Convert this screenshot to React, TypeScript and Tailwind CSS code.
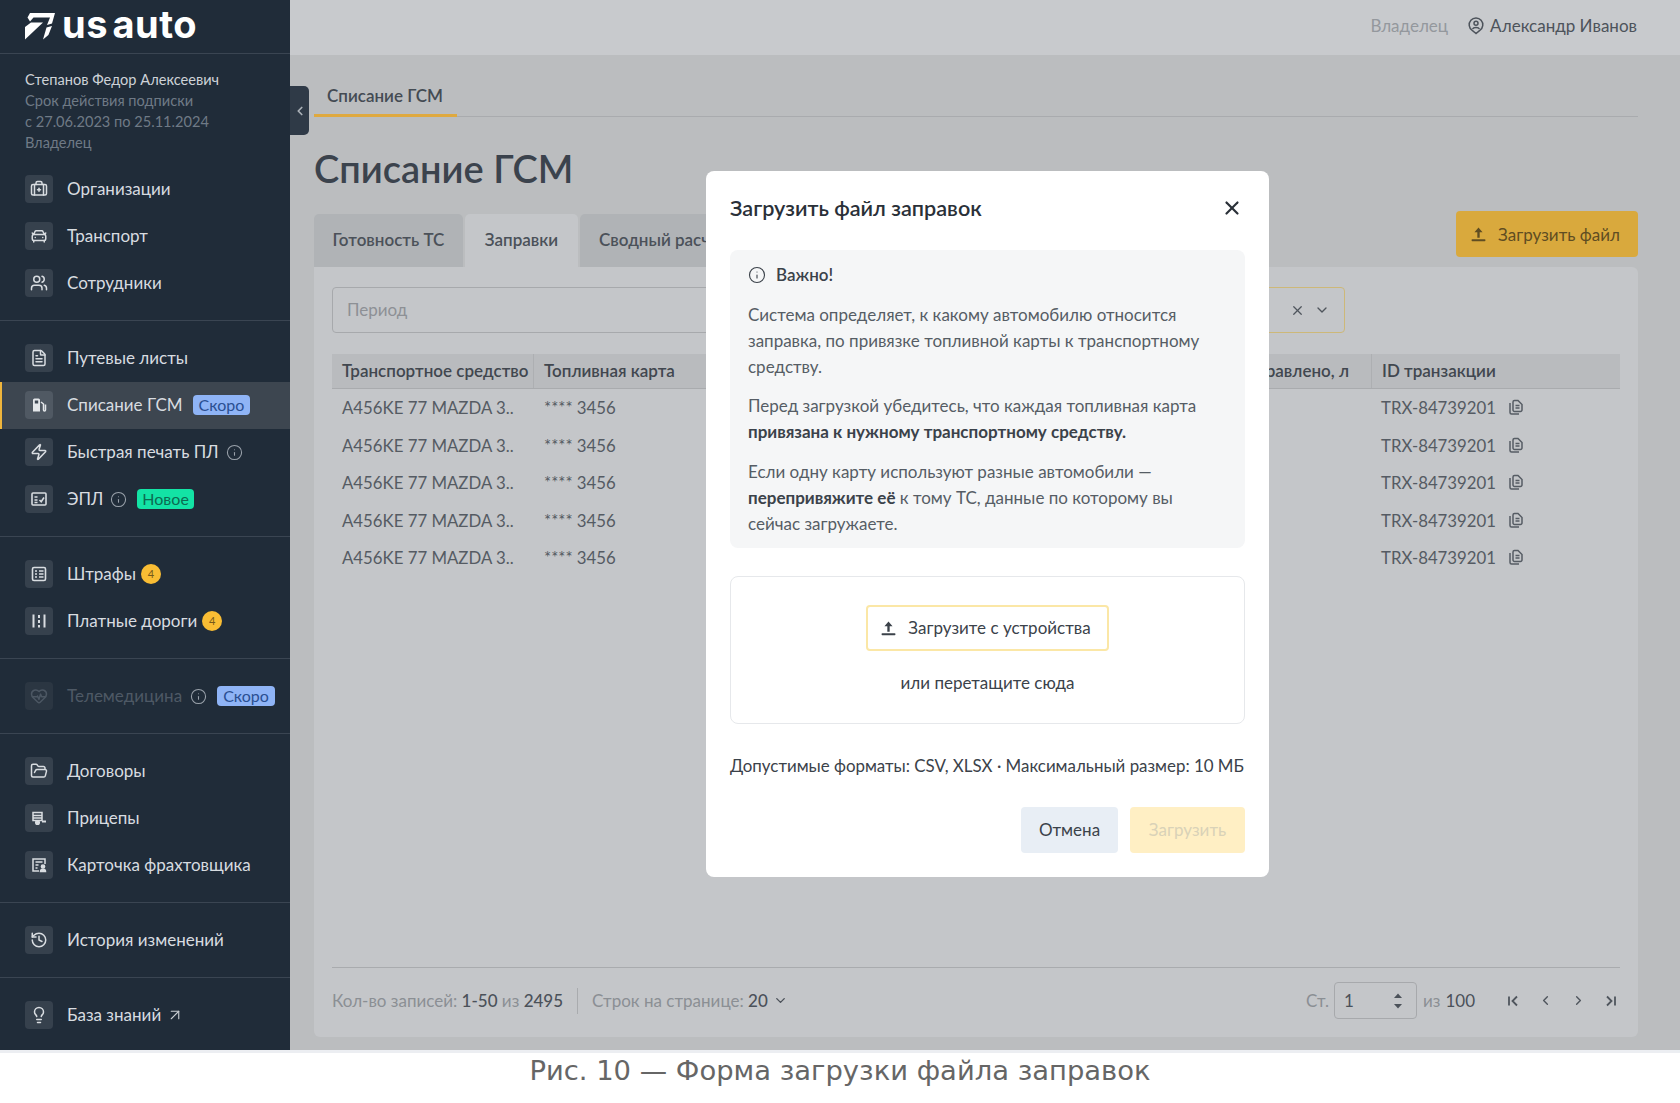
import React from "react";
import {
  BriefcaseMedical, CarFront, Users, FileText, Zap, HeartPulse, FolderOpen, History, Lightbulb,
  ArrowUpRight, Info, X, ChevronDown, ChevronLeft, ChevronRight,
} from "lucide-react";

const FONT = "font-['Lato','Noto_Sans',sans-serif]";

function FuelIcon() {
  return (
    <svg width="18" height="18" viewBox="0 0 18 18" fill="none">
      <path d="M3 15.5V4a1.5 1.5 0 0 1 1.5-1.5h4A1.5 1.5 0 0 1 10 4v11.5H3Z" fill="currentColor" />
      <rect x="4.8" y="4.5" width="3.4" height="3" fill="#3f4954" />
      <path d="M11 6l2.5 2v6a1 1 0 0 0 2 0V8.5" stroke="currentColor" strokeWidth="1.5" />
    </svg>
  );
}
function EplIcon() {
  return (
    <svg width="18" height="18" viewBox="0 0 18 18" fill="none" stroke="currentColor" strokeWidth="1.6">
      <rect x="2" y="3" width="14" height="12" rx="1" />
      <path d="M4.5 7h3M4.5 10h3M4.5 12.5h3M9.5 10l1.7 1.7L14 7.5" />
    </svg>
  );
}
function FinesIcon() {
  return (
    <svg width="18" height="18" viewBox="0 0 18 18" fill="none" stroke="currentColor" strokeWidth="1.6">
      <rect x="2.5" y="2.5" width="13" height="13" rx="1.5" />
      <path d="M5 6h2M5 9h2M5 12h2M9 6h4.5M9 9h4.5M9 12h4.5" />
    </svg>
  );
}
function RoadIcon() {
  return (
    <svg width="18" height="18" viewBox="0 0 18 18" fill="none" stroke="currentColor" strokeWidth="2">
      <path d="M3.5 2.5v13M14.5 2.5v13M9 3v3M9 8v3M9 13v2.5" />
    </svg>
  );
}
function TrailerIcon() {
  return (
    <svg width="18" height="18" viewBox="0 0 18 18" fill="none" stroke="currentColor" strokeWidth="1.5">
      <path d="M3 3.5h9v8H3zM3 6.5h9M3 9h9" />
      <circle cx="7.5" cy="13.5" r="1.8" fill="currentColor" />
      <path d="M12 12.5h4" strokeWidth="2" />
    </svg>
  );
}
function CardIcon() {
  return (
    <svg width="18" height="18" viewBox="0 0 18 18" fill="none" stroke="currentColor" strokeWidth="1.5">
      <path d="M15 8V3H3v12h6" />
      <path d="M5.5 6h7M5.5 9h3M5.5 12h2" />
      <circle cx="13" cy="10.5" r="1.6" fill="currentColor" />
      <path d="M10.5 15.5c0-3 5-3 5 0z" fill="currentColor" />
    </svg>
  );
}
function UploadIcon({ className = "" }: { className?: string }) {
  return (
    <svg className={className} width="17" height="17" viewBox="0 0 16 16" fill="currentColor">
      <path d="M8 1.5 11.8 5.8H9.1v5.2H6.9V5.8H4.2L8 1.5Z" />
      <rect x="1.5" y="12.4" width="13" height="1.9" rx="0.6" />
    </svg>
  );
}
function CopyIcon() {
  return (
    <svg width="17" height="17" viewBox="0 0 17 17" fill="none" stroke="#565c64" strokeWidth="1.5">
      <path d="M2 4v9.5A1.5 1.5 0 0 0 3.5 15H11" />
      <path d="M5 3a1.5 1.5 0 0 1 1.5-1.5H10L14 5.5V11a1.5 1.5 0 0 1-1.5 1.5h-6A1.5 1.5 0 0 1 5 11V3Z" />
      <path d="M7.5 6.5h4M7.5 9h4" />
    </svg>
  );
}
function PinUser() {
  return (
    <svg width="16" height="18" viewBox="0 0 16 18" fill="none" stroke="#4d535b" strokeWidth="1.5">
      <path d="M8 16.5 4.2 13.4A6.8 6.8 0 1 1 11.8 13.4L8 16.5Z" />
      <circle cx="8" cy="6.3" r="2" />
      <path d="M4.6 12c.7-2 6.1-2 6.8 0" />
    </svg>
  );
}
function FirstIcon({ flip = false }: { flip?: boolean }) {
  return (
    <svg className={flip ? "-scale-x-100" : ""} width="14" height="14" viewBox="0 0 14 14" fill="none" stroke="#4f555d" strokeWidth="1.8">
      <path d="M3 2.5v9M11 2.5 6.5 7l4.5 4.5" />
    </svg>
  );
}
function Stepper() {
  return (
    <svg width="10" height="18" viewBox="0 0 10 18" fill="#4b5159">
      <path d="M5 1.5 9 6H1L5 1.5Z" />
      <path d="M5 16.5 1 12h8l-4 4.5Z" />
    </svg>
  );
}
function LogoMark() {
  return (
    <svg width="30" height="27" viewBox="0 0 30 27" fill="#fff">
      <path d="M5 0h25l-3 10.5-5 1.5 3-7.5H8.5L5 8.5 2.5 4.5 5 0Z" />
      <path d="M0 14 6 9.5h12L0 26.5V14Z" />
      <path d="M21.5 14.5 27 13l-3.6 9-5.4 4.5 3.5-12Z" />
    </svg>
  );
}

type Item = { label: string; icon: React.ReactNode; extra?: React.ReactNode; active?: boolean; dim?: boolean };

const Soon = () => (
  <span className="ml-[10px] h-[20px] px-[6px] rounded-[4px] bg-[#8fb4f6] text-[#2a4f92] text-[16px] leading-[20px]">Скоро</span>
);
const Badge = () => (
  <span className="ml-[5px] w-[20px] h-[20px] rounded-full bg-[#f9bd34] text-[#75591a] text-[11px] leading-[20px] text-center">4</span>
);
const Tip = ({ cls = "ml-[7px]" }: { cls?: string }) => <Info size={17} strokeWidth={1.5} className={`${cls} text-[#9aa2ab]`} />;

const groups: Item[][] = [
  [
    { label: "Организации", icon: <BriefcaseMedical size={18} /> },
    { label: "Транспорт", icon: <CarFront size={18} /> },
    { label: "Сотрудники", icon: <Users size={18} /> },
  ],
  [
    { label: "Путевые листы", icon: <FileText size={18} /> },
    { label: "Списание ГСМ", icon: <FuelIcon />, active: true, extra: <Soon /> },
    { label: "Быстрая печать ПЛ", icon: <Zap size={18} />, extra: <Tip /> },
    {
      label: "ЭПЛ",
      icon: <EplIcon />,
      extra: (
        <>
          <Tip />
          <span className="ml-[10px] h-[20px] px-[5px] rounded-[4px] bg-[#13e3a5] text-[#0c6b52] text-[16px] leading-[20px]">Новое</span>
        </>
      ),
    },
  ],
  [
    { label: "Штрафы", icon: <FinesIcon />, extra: <Badge /> },
    { label: "Платные дороги", icon: <RoadIcon />, extra: <Badge /> },
  ],
  [{ label: "Телемедицина", icon: <HeartPulse size={18} />, dim: true, extra: <><Tip cls="ml-[8px]" /><Soon /></> }],
  [
    { label: "Договоры", icon: <FolderOpen size={18} /> },
    { label: "Прицепы", icon: <TrailerIcon /> },
    { label: "Карточка фрахтовщика", icon: <CardIcon /> },
  ],
  [{ label: "История изменений", icon: <History size={18} /> }],
  [{ label: "База знаний", icon: <Lightbulb size={18} />, extra: <ArrowUpRight size={18} strokeWidth={1.5} className="ml-[5px] text-[#c9ced3]" /> }],
];

function NavRow({ item }: { item: Item }) {
  return (
    <div className={`h-[47px] flex items-center pl-[25px] pb-px ${item.active ? "bg-[#3d4650] border-l-2 border-[#efb53c] !pl-[23px]" : ""}`}>
      <span className={`w-[28px] h-[28px] rounded-[4px] flex items-center justify-center ${item.active ? "bg-[#505963] text-[#e4e7ea]" : item.dim ? "bg-[#2b3642] text-[#4c5763]" : "bg-[#36414d] text-[#d9dde1]"}`}>
        {item.icon}
      </span>
      <span className={`ml-[14px] text-[17px] ${item.dim ? "text-[#4e5965]" : "text-[#d8dce0]"}`}>{item.label}</span>
      {item.extra}
    </div>
  );
}

function Sidebar() {
  return (
    <aside className="w-[290px] shrink-0 h-full bg-[#202c39] flex flex-col">
      <div className="h-[54px] shrink-0 border-b border-[#3a4552] pl-[25px] flex items-center">
        <LogoMark />
        <span className="ml-[7px] text-white text-[38px] leading-[38px] font-bold tracking-[0.5px] [word-spacing:-5px] font-['Inter',sans-serif] -mt-[6px]">us auto</span>
      </div>
      <div className="pl-[25px] pt-[15px] text-[14.6px] leading-[21px] text-[#6f7a86]">
        <div className="text-[#cdd2d7]">Степанов Федор Алексеевич</div>
        <div>Срок действия подписки</div>
        <div>с 27.06.2023 по 25.11.2024</div>
        <div>Владелец</div>
      </div>
      <div className="-mt-px">
        {groups.map((g, i) => (
          <div key={i} className={`pt-[14px] pb-[13px] ${i < groups.length - 1 ? "border-b border-[#3a4552]" : ""}`}>
            {g.map((it) => (
              <NavRow key={it.label} item={it} />
            ))}
          </div>
        ))}
      </div>
    </aside>
  );
}

function Modal() {
  return (
    <div className="absolute left-[416px] top-[171px] w-[563px] bg-white rounded-[8px] px-[24px] pt-[20px] pb-[24px] text-[#3b424a]">
      <div className="h-[36px] flex items-center justify-between -mt-[1px] mb-[2px]">
        <h2 className="text-[21.6px] font-semibold text-[#2a3038]">Загрузить файл заправок</h2>
        <X size={22} strokeWidth={2.4} className="text-[#2a3038] mr-[2px]" />
      </div>
      <div className="mt-[24px] bg-[#f5f6f7] rounded-[8px] px-[18px] pt-[13px] pb-[11px] text-[17px] leading-[26px] text-[#565d65]">
        <div className="h-[24px] flex items-center gap-[10px] mb-[15px] text-[#3b424a] font-semibold">
          <Info size={18} strokeWidth={1.5} />
          <span>Важно!</span>
        </div>
        <p>Система определяет, к какому автомобилю относится заправка, по привязке топливной карты к транспортному средству.</p>
        <p className="mt-[13px]">
          Перед загрузкой убедитесь, что каждая топливная карта <b className="font-bold text-[#3b424a]">привязана к нужному транспортному средству.</b>
        </p>
        <p className="mt-[14px]">
          Если одну карту используют разные автомобили — <b className="font-bold text-[#3b424a]">перепривяжите её</b> к тому ТС, данные по которому вы сейчас загружаете.
        </p>
      </div>
      <div className="mt-[28px] h-[148px] border border-[#e6e8eb] rounded-[8px] flex flex-col items-center pt-[28px]">
        <div className="w-[243px] h-[46px] pr-[4px] border-2 border-[#fbe7a6] rounded-[4px] flex items-center justify-center gap-[11px] text-[17px]">
          <UploadIcon />
          <span>Загрузите с устройства</span>
        </div>
        <div className="mt-[20px] text-[17px] leading-[24px]">или перетащите сюда</div>
      </div>
      <div className="mt-[30px] text-[16.9px] leading-[24px] whitespace-nowrap">Допустимые форматы: CSV, XLSX · Максимальный размер: 10 МБ</div>
      <div className="mt-[29px] flex justify-end gap-[12px]">
        <div className="w-[97px] h-[46px] rounded-[4px] bg-[#e8eef5] flex items-center justify-center text-[17px]">Отмена</div>
        <div className="w-[115px] h-[46px] rounded-[4px] bg-[#ffefc4] flex items-center justify-center text-[17px] text-[#d9d2b8]">Загрузить</div>
      </div>
    </div>
  );
}

function Row() {
  return (
    <div className="h-[37.5px] flex items-center text-[16.8px] text-[#555b63]">
      <div className="w-[212px] pl-[10px] whitespace-nowrap">A456KE 77 MAZDA 3..</div>
      <div className="flex-1">**** 3456</div>
      <div className="w-[249px] pl-[10px] flex items-center gap-[12px]">
        <span>TRX-84739201</span>
        <CopyIcon />
      </div>
    </div>
  );
}

function Main() {
  return (
    <main className="relative flex-1 h-full bg-[#bbbdbf] flex flex-col">
      <header className="h-[55px] shrink-0 bg-[#c8cacd] flex items-center justify-end pr-[43px] pb-[3px] text-[17px]">
        <span className="text-[#94989d]">Владелец</span>
        <span className="ml-[20px] flex"><PinUser /></span>
        <span className="ml-[6px] text-[#4d535b]">Александр Иванов</span>
      </header>
      <div className="absolute left-0 top-[86px] w-[19px] h-[49px] rounded-r-[5px] bg-[#2f3a47] flex items-center justify-center">
        <ChevronLeft size={14} strokeWidth={3} className="text-[#aab0b7]" />
      </div>
      <div className="pl-[24px] pr-[42px] flex flex-col flex-1">
        <div className="mt-[20px] h-[42px] border-b border-[#a9abae] flex">
          <div className="w-[143px] h-[42px] pl-[13px] pt-[8px] border-b-[3px] border-[#dfa93f] text-[17px] font-semibold text-[#444b53]">Списание ГСМ</div>
        </div>
        <h1 className="mt-[28px] h-[46px] text-[38px] leading-[46px] font-semibold text-[#3b434d] whitespace-nowrap">Списание ГСМ</h1>
        <div className="mt-[20px] h-[56px] flex justify-between items-start">
          <div className="mt-[3px] flex gap-[2px] text-[17px] font-semibold text-[#4b5159]">
            <div className="h-[53px] w-[149px] pb-[1px] bg-[#b0b3b6] rounded-t-[5px] flex items-center justify-center">Готовность ТС</div>
            <div className="h-[53px] w-[113px] pb-[1px] bg-[#c4c6c9] rounded-t-[5px] flex items-center justify-center">Заправки</div>
            <div className="h-[53px] w-[200px] pb-[1px] bg-[#b0b3b6] rounded-t-[5px] flex items-center pl-[19px]">Сводный расчёт</div>
          </div>
          <div className="w-[182px] h-[46px] pr-[4px] pt-px rounded-[4px] bg-[#d9a93d] text-[#5f4d22] flex items-center justify-center gap-[11px] text-[17px]">
            <UploadIcon />
            <span>Загрузить файл</span>
          </div>
        </div>
        <section className="w-[1324px] h-[770px] rounded-b-[6px] rounded-tr-[6px] bg-[#c4c6c9] px-[18px] pt-[20px] pb-[4px] flex flex-col">
          <div className="h-[46px] flex gap-[8px]">
            <div className="flex-1 border border-[#a7a9ac] rounded-[4px] flex items-center pl-[14px] text-[17px] text-[#8d9095]">Период</div>
            <div className="w-[500px] border border-[#cdb878] rounded-[4px] flex items-center justify-end pr-[14px] gap-[9px] text-[#4f555d] mr-[275px]">
              <X size={15} strokeWidth={2} />
              <ChevronDown size={16} strokeWidth={2} />
            </div>
          </div>
          <div className="mt-[21px] h-[35px] bg-[#b9bbbe] border-b border-[#a9abae] flex items-center text-[17px] font-semibold text-[#41474f]">
            <div className="w-[202px] pl-[10px] h-full flex items-center border-r border-[#adafb2] whitespace-nowrap shrink-0">Транспортное средство</div>
            <div className="flex-1 pl-[10px]">Топливная карта</div>
            <div className="pr-[22px]">Заправлено, л</div>
            <div className="w-[249px] pl-[10px] h-full flex items-center border-l border-[#adafb2] shrink-0">ID транзакции</div>
          </div>
          {[0, 1, 2, 3, 4].map((i) => (
            <Row key={i} />
          ))}
          <div className="flex-1" />
          <div className="h-[66px] border-t border-[#a9abae] flex items-center justify-between text-[17px] text-[#8b8f94]">
            <div className="flex items-center">
              <span>Кол-во записей: <span className="text-[#4b5159] font-medium">1-50</span> из <span className="text-[#4b5159] font-medium">2495</span></span>
              <span className="mx-[14px] w-px h-[26px] bg-[#a9abae]" />
              <span>Строк на странице: <span className="text-[#4b5159] font-medium">20</span></span>
              <ChevronDown size={15} strokeWidth={2.2} className="ml-[5px] text-[#4b5159]" />
            </div>
            <div className="flex items-center pr-[2px]">
              <span>Ст.</span>
              <div className="ml-[5px] w-[83px] h-[37px] border border-[#a7a9ac] rounded-[4px] flex items-center justify-between pl-[9px] pr-[13px] text-[#4b5159]">
                <span>1</span>
                <Stepper />
              </div>
              <span className="ml-[6px]">из</span>
              <span className="ml-[5px] text-[#4b5159]">100</span>
              <div className="ml-[31px] flex items-center gap-[18px] text-[#4f555d]">
                <FirstIcon />
                <ChevronLeft size={15} strokeWidth={2.2} />
                <ChevronRight size={15} strokeWidth={2.2} />
                <FirstIcon flip />
              </div>
            </div>
          </div>
        </section>
      </div>
      <Modal />
    </main>
  );
}

export default function App() {
  return (
    <div className={`w-[1680px] h-[1103px] overflow-hidden bg-white flex flex-col ${FONT}`}>
      <div className="h-[1050px] flex">
        <Sidebar />
        <Main />
      </div>
      <div className="h-[3px] bg-[#eceef2]" />
      <div className="flex-1 text-center text-[27.4px] leading-[36px] text-[#666] font-['DejaVu_Sans',sans-serif]">Рис. 10 — Форма загрузки файла заправок</div>
    </div>
  );
}
